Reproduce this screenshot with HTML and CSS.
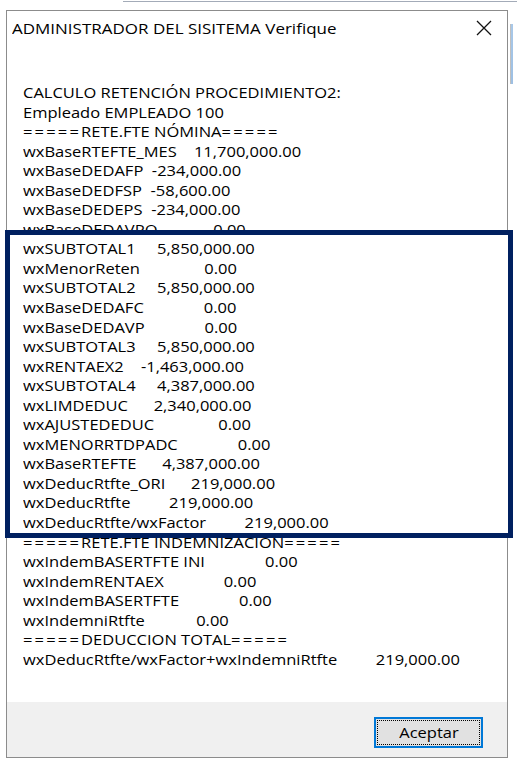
FILE: index.html
```html
<!DOCTYPE html>
<html lang="es">
<head>
<meta charset="utf-8">
<title>ADMINISTRADOR DEL SISITEMA Verifique</title>
<link rel="stylesheet" href="styles.css">
</head>
<body>
<div class="screen">
  <div class="bgtop"><div class="bgline"></div></div>
  <div class="main">
    <div class="win">
      <div class="titlebar">
        <span class="title"><span class="tt">ADMINISTRADOR DEL SISITEMA Verifique</span></span>
        <span class="close"><svg width="16" height="16" viewBox="0 0 16 16"><path d="M1 1L15 15M15 1L1 15" stroke="#111" stroke-width="1.3" fill="none"/></svg></span>
      </div>
      <div class="content">
        <div class="ln">CALCULO RETENCIÓN PROCEDIMIENTO2:</div>
        <div class="ln">Empleado EMPLEADO 100</div>
        <div class="ln"><span class="eq">=====</span>RETE.FTE NÓMINA<span class="eq">=====</span></div>
        <div class="ln">wxBaseRTEFTE_MES    11,700,000.00</div>
        <div class="ln">wxBaseDEDAFP  -234,000.00</div>
        <div class="ln">wxBaseDEDFSP  -58,600.00</div>
        <div class="ln">wxBaseDEDEPS  -234,000.00</div>
        <div class="ln">wxBaseDEDAVPO             0.00</div>
        <div class="hl">
          <div class="ln">wxSUBTOTAL1     5,850,000.00</div>
          <div class="ln">wxMenorReten               0.00</div>
          <div class="ln">wxSUBTOTAL2     5,850,000.00</div>
          <div class="ln">wxBaseDEDAFC              0.00</div>
          <div class="ln">wxBaseDEDAVP              0.00</div>
          <div class="ln">wxSUBTOTAL3     5,850,000.00</div>
          <div class="ln">wxRENTAEX2    -1,463,000.00</div>
          <div class="ln">wxSUBTOTAL4     4,387,000.00</div>
          <div class="ln">wxLIMDEDUC      2,340,000.00</div>
          <div class="ln">wxAJUSTEDEDUC               0.00</div>
          <div class="ln">wxMENORRTDPADC              0.00</div>
          <div class="ln">wxBaseRTEFTE      4,387,000.00</div>
          <div class="ln">wxDeducRtfte_ORI      219,000.00</div>
          <div class="ln">wxDeducRtfte         219,000.00</div>
          <div class="ln">wxDeducRtfte/wxFactor         219,000.00</div>
        </div>
        <div class="ln"><span class="eq">=====</span>RETE.FTE INDEMNIZACION<span class="eq">=====</span></div>
        <div class="ln">wxIndemBASERTFTE INI              0.00</div>
        <div class="ln">wxIndemRENTAEX              0.00</div>
        <div class="ln">wxIndemBASERTFTE              0.00</div>
        <div class="ln">wxIndemniRtfte            0.00</div>
        <div class="ln"><span class="eq">=====</span>DEDUCCION TOTAL<span class="eq">=====</span></div>
        <div class="ln">wxDeducRtfte/wxFactor+wxIndemniRtfte         219,000.00</div>
      </div>
      <div class="footer">
        <button class="btn" type="button"><span class="focus"><span class="bt">Aceptar</span></span></button>
      </div>
    </div>
    <div class="side"><div class="sidebar"></div></div>
  </div>
</div>
</body>
</html>
```
FILE: styles.css
```css
* { box-sizing: border-box; }
html, body { margin: 0; padding: 0; background: #fff; }
body {
  width: 517px;
  height: 766px;
  overflow: hidden;
  font-family: "Open Sans", "Noto Sans", sans-serif;
  color: #000;
}
.screen { display: flex; flex-direction: column; height: 766px; }
.bgtop { height: 10px; }
.bgline { margin-left: 123px; margin-top: 1px; height: 1px; background: #a3abb8; }
.main { display: flex; flex: 1; align-items: flex-start; }
.win {
  margin-left: 6px;
  width: 502px;
  height: 748px;
  border: 1px solid #8c8c8c;
  background: #fff;
  display: flex;
  flex-direction: column;
}
.titlebar { height: 34px; display: flex; align-items: center; }
.title { flex: 1; padding-left: 5px; font-size: 14.4px; white-space: nowrap; }
.tt { display: inline-block; transform: scaleX(1.18); transform-origin: 0 50%; }
.close { width: 46px; height: 34px; display: flex; align-items: center; justify-content: center; }
.content { flex: 1; padding: 38px 16px 0 16px; font-size: 14.4px; line-height: 19.55px; }
.ln {
  white-space: pre;
  width: fit-content;
  height: 19.55px;
  transform: scaleX(1.146);
  transform-origin: 0 50%;
}
.eq { letter-spacing: 1.9px; }
.hl {
  position: relative;
  background: #fff;
  border: 5px solid #002060;
  margin: -9px -22px -5px -18px;
  padding: 4px 17px 0 13px;
}
.footer {
  height: 55px;
  background: #f0f0f0;
  display: flex;
  justify-content: flex-end;
  align-items: flex-start;
  padding: 15px 24px 0 0;
}
.btn {
  width: 109px;
  height: 31px;
  border: 2px solid #0078d7;
  background: #e1e1e1;
  padding: 1px;
  font-family: inherit;
  font-size: 14.4px;
  color: #000;
}
.focus {
  display: flex;
  height: 100%;
  align-items: center;
  justify-content: center;
  border: 1px dotted #000;
}
.bt { display: inline-block; transform: scaleX(1.146); }
.side { flex: 1; padding: 14px 0 0 2px; }
.sidebar {
  width: 3px;
  height: 60px;
  background: linear-gradient(#a9c8e8, #9dbfe3);
  border-left: 1px solid #c0c0c0;
}
```
